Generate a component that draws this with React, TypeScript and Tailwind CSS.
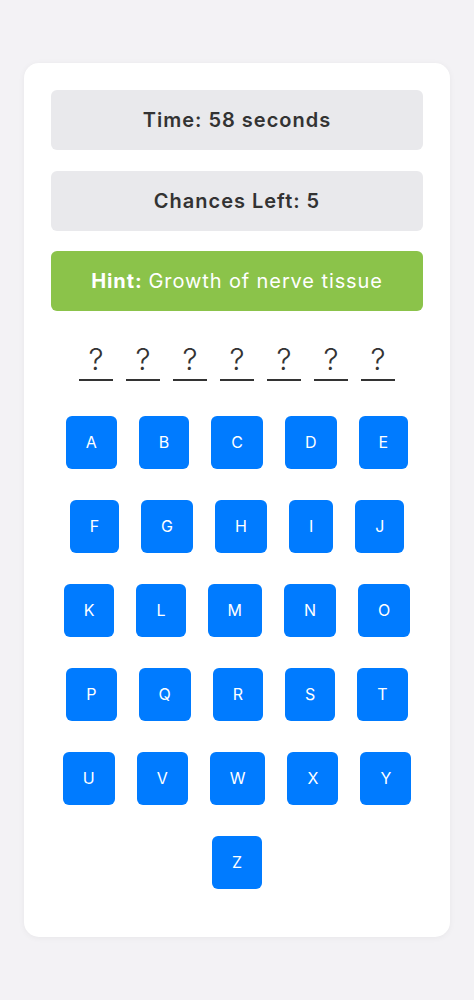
import React from 'react';

const rows = ['ABCDE', 'FGHIJ', 'KLMNO', 'PQRST', 'UVWXY', 'Z'];

const App: React.FC = () => {
  const slots = Array.from({ length: 7 });

  return (
    <div
      className="min-h-screen bg-[#f3f2f5] px-6 pt-[63px] pb-[63px]"
      style={{ fontFamily: 'Inter, "Noto Sans", sans-serif' }}
    >
      <div className="bg-white rounded-[15px] shadow-[0_1px_6px_rgba(0,0,0,0.05)] px-[27px] pt-[27px] pb-[33px]">
        <div className="h-[60px] rounded-md bg-[#e9e9ec] flex items-center justify-center text-[20px] tracking-[1px] font-semibold text-[#333]">
          Time: 58 seconds
        </div>
        <div className="mt-[21px] h-[60px] rounded-md bg-[#e9e9ec] flex items-center justify-center text-[20px] tracking-[1px] font-semibold text-[#333]">
          Chances Left: 5
        </div>
        <div className="mt-[20px] h-[60px] rounded-md bg-[#8bc34a] flex items-center justify-center text-[20px] tracking-[0.9px] text-white">
          <span className="font-bold mr-[6px]">Hint:</span>Growth of nerve tissue
        </div>

        {/* word slots */}
        <div className="mt-[28px] flex justify-center gap-[13px]">
          {slots.map((_, i) => (
            <span
              key={i}
              className="w-[34px] text-center text-[30px] font-light leading-[40px] text-[#333] border-b-2 border-[#333]"
            >
              ?
            </span>
          ))}
        </div>

        {/* keyboard */}
        <div className="mt-[19px]">
          {rows.map((row) => (
            <div key={row} className="flex justify-center">
              {row.split('').map((l) => (
                <button
                  key={l}
                  className="mx-[11px] my-[15.5px] h-[53px] px-5 rounded-md bg-[#007bff] text-white text-base"
                >
                  {l}
                </button>
              ))}
            </div>
          ))}
        </div>
      </div>
    </div>
  );
};

export default App;
